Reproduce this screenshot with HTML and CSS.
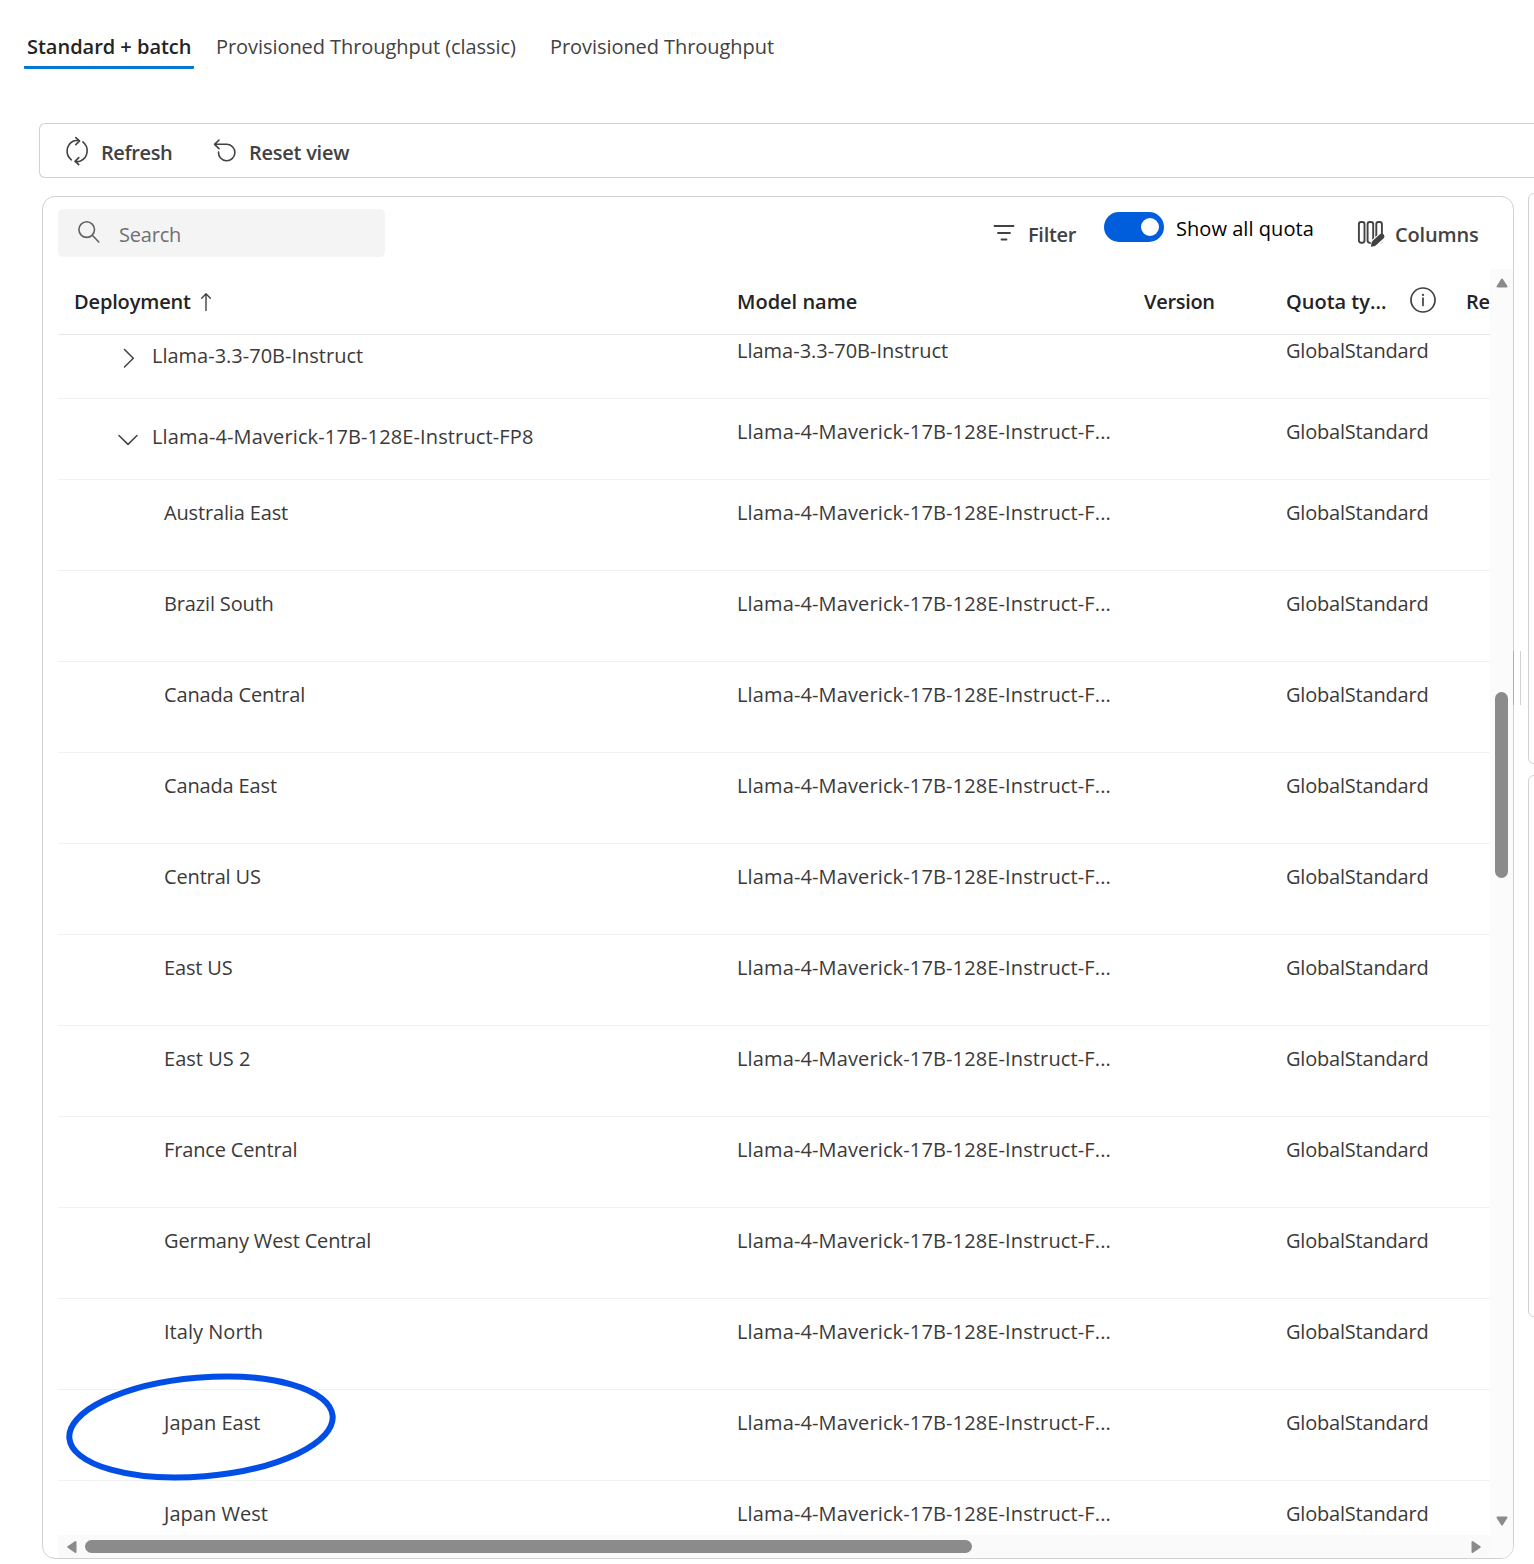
FILE: index.html
```html
<!DOCTYPE html>
<html lang="en">
<head>
<meta charset="utf-8">
<title>Quota</title>
<link rel="stylesheet" href="styles.css">
</head>
<body>
<nav class="tabs">
  <a class="tab tab-active">Standard + batch</a>
  <a class="tab tab-classic">Provisioned Throughput (classic)</a>
  <a class="tab tab-ptu">Provisioned Throughput</a>
</nav>
<div class="toolbar">
  <button class="tool refresh"><svg width="26" height="30" viewBox="0 0 26 30"><path d="M7.300 23.800A11.200 11.200 0 0 1 9 5.200Q11.500 4.200 15.500 4.800M11.800 1.600L15.600 5L11.800 8.600M18.800 5.900A11.200 11.200 0 0 1 16.500 25Q14.500 25.800 11.200 25.500M14.800 21.600L11 25.400L14.800 28.600"/></svg><span>Refresh</span></button>
  <button class="tool reset"><svg width="26" height="30" viewBox="0 0 26 30"><path d="M2.500 8.300H15A8.200 8.200 0 1 1 6.500 16M7 4L2.500 8.300L7 12.600"/></svg><span>Reset view</span></button>
</div>
<main class="main">
  <section class="panel">
    <div class="controls">
      <div class="search"><svg width="24" height="24" viewBox="0 0 24 24"><circle cx="9.700" cy="8.600" r="7.800"/><path d="M15.300 14.300L21.800 21"/></svg><span>Search</span></div>
      <button class="tool filter"><svg width="22" height="18" viewBox="0 0 22 18"><path d="M1.500 2H20.500M5 9H17M8.500 15.500H13.500"/></svg><span>Filter</span></button>
      <div class="toggle"><i class="knob"></i></div>
      <span class="toggle-label">Show all quota</span>
      <button class="tool columns"><svg width="29" height="28" viewBox="0 0 29 28"><rect x="1.900" y="3" width="5.600" height="20.800" rx="2.200"/><rect x="10.600" y="3" width="5.600" height="20.800" rx="2.200"/><rect x="19.300" y="3" width="5.600" height="20.800" rx="2.200"/><path class="halo" d="M15.800 26L26 16.800"/><path class="pencil" d="M14.400 27.800Q13.800 27.700 13.900 27L14.800 23.300Q15 22.600 15.500 22L22.900 15.200Q24.900 13.700 26.700 15.400Q28.400 17.300 26.700 19.200L19.300 26.100Q18.700 26.700 18 26.900Z"/></svg><span>Columns</span></button>
    </div>
    <div class="grid">
      <div class="table">
        <div class="row head">
          <div class="cell h-deploy">Deployment<svg class="sort" width="12" height="20" viewBox="0 0 12 20"><path d="M6 17.500V1M1.700 5.200L6 0.800L10.300 5.200"/></svg></div>
          <div class="cell h-model">Model name</div>
          <div class="cell h-version">Version</div>
          <div class="cell h-quota"><span>Quota ty...</span><svg class="info" width="28" height="28" viewBox="0 0 28 28"><circle cx="14" cy="14" r="12"/><path d="M14 12.200V19.500"/><circle class="dot" cx="14" cy="8.900" r="1.100"/></svg></div>
          <div class="cell h-re">Re</div>
        </div>
        <div class="body">
          <div class="row group first"><div class="cell parent"><svg width="20" height="20" viewBox="0 0 20 20"><path d="M6.500 1.500L15.300 10.300L6.500 19"/></svg><span>Llama-3.3-70B-Instruct</span></div><div class="cell model short">Llama-3.3-70B-Instruct</div><div class="cell"></div><div class="cell quota">GlobalStandard</div></div>
          <div class="row group"><div class="cell parent long"><svg width="20" height="20" viewBox="0 0 20 20"><path d="M1 6.500L10 15.400L19 6.500"/></svg><span>Llama-4-Maverick-17B-128E-Instruct-FP8</span></div><div class="cell model">Llama-4-Maverick-17B-128E-Instruct-F...</div><div class="cell"></div><div class="cell quota">GlobalStandard</div></div>
          <div class="row"><div class="cell region">Australia East</div><div class="cell model">Llama-4-Maverick-17B-128E-Instruct-F...</div><div class="cell"></div><div class="cell quota">GlobalStandard</div></div>
          <div class="row"><div class="cell region">Brazil South</div><div class="cell model">Llama-4-Maverick-17B-128E-Instruct-F...</div><div class="cell"></div><div class="cell quota">GlobalStandard</div></div>
          <div class="row"><div class="cell region">Canada Central</div><div class="cell model">Llama-4-Maverick-17B-128E-Instruct-F...</div><div class="cell"></div><div class="cell quota">GlobalStandard</div></div>
          <div class="row"><div class="cell region">Canada East</div><div class="cell model">Llama-4-Maverick-17B-128E-Instruct-F...</div><div class="cell"></div><div class="cell quota">GlobalStandard</div></div>
          <div class="row"><div class="cell region">Central US</div><div class="cell model">Llama-4-Maverick-17B-128E-Instruct-F...</div><div class="cell"></div><div class="cell quota">GlobalStandard</div></div>
          <div class="row"><div class="cell region">East US</div><div class="cell model">Llama-4-Maverick-17B-128E-Instruct-F...</div><div class="cell"></div><div class="cell quota">GlobalStandard</div></div>
          <div class="row"><div class="cell region wide">East US 2</div><div class="cell model">Llama-4-Maverick-17B-128E-Instruct-F...</div><div class="cell"></div><div class="cell quota">GlobalStandard</div></div>
          <div class="row"><div class="cell region">France Central</div><div class="cell model">Llama-4-Maverick-17B-128E-Instruct-F...</div><div class="cell"></div><div class="cell quota">GlobalStandard</div></div>
          <div class="row"><div class="cell region">Germany West Central</div><div class="cell model">Llama-4-Maverick-17B-128E-Instruct-F...</div><div class="cell"></div><div class="cell quota">GlobalStandard</div></div>
          <div class="row"><div class="cell region wide">Italy North</div><div class="cell model">Llama-4-Maverick-17B-128E-Instruct-F...</div><div class="cell"></div><div class="cell quota">GlobalStandard</div></div>
          <div class="row"><div class="cell region wide">Japan East</div><div class="cell model">Llama-4-Maverick-17B-128E-Instruct-F...</div><div class="cell"></div><div class="cell quota">GlobalStandard</div></div>
          <div class="row last"><div class="cell region wide">Japan West</div><div class="cell model">Llama-4-Maverick-17B-128E-Instruct-F...</div><div class="cell"></div><div class="cell quota">GlobalStandard</div></div>
        </div>
        <div class="hbar">
          <svg width="10" height="12" viewBox="0 0 10 12"><path d="M8.500 1V11L1.200 6Z"/></svg>
          <div class="hthumb"></div>
          <svg class="end" width="10" height="12" viewBox="0 0 10 12"><path d="M1.500 1V11L8.800 6Z"/></svg>
        </div>
      </div>
      <div class="vbar">
        <svg width="12" height="10" viewBox="0 0 12 10"><path d="M1.500 8.500H10.500L6 1.500Z"/></svg>
        <div class="vthumb"></div>
        <svg class="end" width="12" height="10" viewBox="0 0 12 10"><path d="M1.500 1.500H10.500L6 8.500Z"/></svg>
      </div>
    </div>
  </section>
  <div class="splitter"></div>
  <aside class="side"><div class="card card-top"></div><div class="card card-bottom"></div></aside>
</main>
<svg class="annotation" width="280" height="116" viewBox="0 0 280 116"><ellipse cx="140" cy="58" rx="132.100" ry="49.400" transform="rotate(-4.840 140 58)"/></svg>
</body>
</html>
```
FILE: styles.css
```css
* { box-sizing: border-box; }
body {
  margin: 0;
  position: relative;
  width: 1534px;
  height: 1564px;
  overflow: hidden;
  background: #fff;
  color: #3b3a39;
  font: 20px/28px "Open Sans", "Noto Sans", sans-serif;
  white-space: nowrap;
}
svg { display: block; flex: none; fill: none; stroke: #424242; stroke-width: 1.6; stroke-linecap: round; stroke-linejoin: round; overflow: visible; }
.tabs { display: flex; height: 123px; padding: 33px 0 0 24px; }
.tab { height: 36px; color: #424242; letter-spacing: -0.06px; }
.tab-active { width: 170px; padding-left: 3px; border-bottom: 3px solid #0078d4; border-radius: 1px; color: #242424; font-weight: 600; letter-spacing: -0.02px; }
.tab-classic { margin-left: 22px; width: 334px; }
.toolbar { display: flex; align-items: center; height: 55px; margin-left: 39px; padding-left: 24px; border: 1px solid #d1d1d1; border-right: 0; border-radius: 6px 0 0 6px; }
.tool { display: flex; align-items: center; padding: 0; border: 0; background: none; color: #424242; font: inherit; font-weight: 600; letter-spacing: -0.3px; }
.tool span { position: relative; top: 2px; }
.refresh { gap: 11px; width: 148px; letter-spacing: -0.4px; }
.reset { gap: 11px; letter-spacing: -0.25px; }
.main { display: flex; margin-top: 18px; padding-left: 42px; align-items: flex-start; }
.panel { width: 1472px; height: 1363px; border: 1px solid #d1d1d1; border-radius: 13px; overflow: hidden; display: flex; flex-direction: column; }
.controls { display: flex; height: 72px; padding: 12px 0 0 15px; }
.search { display: flex; align-items: center; gap: 18px; width: 327px; height: 48px; padding-left: 19px; background: #f4f4f4; border-radius: 5px; color: #707070; }
.search span { position: relative; top: 2px; letter-spacing: -0.2px; }
.search svg { stroke: #616161; }
.filter { height: 48px; gap: 13px; margin-left: 608px; width: 111px; }
.filter svg { stroke-width: 1.8; }
.toggle { display: flex; align-items: center; justify-content: flex-end; width: 60px; height: 30px; margin-top: 3px; padding-right: 5px; border-radius: 15px; background: #005ddb; }
.knob { width: 18px; height: 18px; border-radius: 50%; background: #fff; }
.toggle-label { margin: 6px 0 0 12px; width: 181px; color: #000; letter-spacing: 0.05px; }
.columns { height: 48px; gap: 9px; letter-spacing: -0.17px; }
.columns svg { stroke-width: 1.9; }
.columns .halo { stroke: #fff; stroke-width: 8.5; stroke-linecap: butt; }
.columns .pencil { fill: #424242; stroke: none; }
.grid { display: flex; flex: 1; min-height: 0; padding-left: 15px; }
.table { display: flex; flex-direction: column; width: 1432px; overflow: hidden; }
.row { display: grid; grid-template-columns: 679px 407px 142px 180px 60px; flex: none; height: 91px; border-bottom: 1px solid #f0f0f0; }
.cell { padding-top: 19px; letter-spacing: 0; }
.row.head { height: 66px; border-bottom-color: #e6e6e6; color: #242424; font-weight: 600; }
.head .cell { display: flex; letter-spacing: -0.3px; }
.head .h-deploy { padding-left: 16px; letter-spacing: -0.15px; }
.sort { margin: 5px 0 0 9px; stroke-width: 1.4; }
.head .h-model, .head .h-quota { letter-spacing: 0; }
.h-quota span { width: 123px; }
.info { margin-top: -2px; stroke-width: 1.7; }
.info .dot { fill: #424242; stroke: none; }
.body { height: 1200px; overflow: hidden; }
.model { letter-spacing: 0.13px; }
.short { letter-spacing: 0; }
.group { height: 81px; }
.group.first { margin-top: -17px; }
.parent { display: flex; gap: 14px; padding: 24px 0 0 60px; }
.long { letter-spacing: 0.13px; }
.parent svg { margin-top: 6px; stroke-width: 1.5; }
.region { padding-left: 106px; letter-spacing: -0.15px; }
.wide { letter-spacing: 0.03px; }
.quota { letter-spacing: -0.2px; }
.last { border: 0; }
.hbar { display: flex; align-items: center; flex: 1; padding-left: 9px; background: #fafafa; }
.hbar svg, .vbar svg { fill: #8b8b8b; stroke: #8b8b8b; stroke-width: 2; }
.hthumb { width: 887px; height: 13px; margin-left: 8px; border-radius: 7px; background: #8b8b8b; }
.hbar .end { margin-left: 499px; }
.vbar { display: flex; flex-direction: column; align-items: center; width: 23px; padding-top: 9px; background: #fbfbfb; }
.vthumb { width: 13px; height: 186px; margin-top: 404px; border-radius: 7px; background: #8b8b8b; flex: none; }
.vbar .end { margin-top: 638px; }
.splitter { width: 8px; height: 54px; margin: 455px 0 0 -1px; border: solid #b0b0b0; border-width: 0 1px; border-right-color: #d1d1d1; }
.side { display: flex; flex-direction: column; gap: 11px; margin: -3px 0 0 7px; width: 6px; overflow: hidden; }
.card { width: 40px; border: 1px solid #d1d1d1; border-radius: 6px; }
.card-top { height: 571px; }
.card-bottom { height: 542px; }
.annotation { position: absolute; left: 61px; top: 1369px; stroke: #004ee6; stroke-width: 6; }
```
